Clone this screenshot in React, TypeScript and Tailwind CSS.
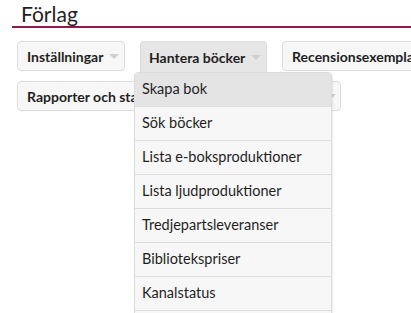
import React from "react";

const Caret = () => (
  <span className="ml-[6px] inline-block h-0 w-0 border-x-[5px] border-t-[5px] border-x-transparent border-t-[#cfcfcf]" />
);

const menuItems = [
  "Skapa bok",
  "Sök böcker",
  "Lista e-boksproduktioner",
  "Lista ljudproduktioner",
  "Tredjepartsleveranser",
  "Bibliotekspriser",
  "Kanalstatus",
  "Rapporter",
];

const App = () => {
  return (
    <div className="h-[313px] w-[411px] overflow-hidden bg-white px-3 font-['Lato',sans-serif] text-[#1f1f1f]">
      <h1 className="w-[600px] border-b-2 border-[#8b1a4e] px-[9px] pt-[1px] text-[21px] leading-[25px]">
        Förlag
      </h1>

      <div className="relative mt-[13px] flex w-[620px] flex-wrap gap-x-[15px] gap-y-[9px] pl-[5px]">
        <button className="flex h-[30px] w-[108px] items-center rounded-[4px] border border-[#dcdcdc] bg-[#f7f7f7] pl-[9px] text-[14px] font-bold">
          Inställningar
          <Caret />
        </button>

        <div className="relative">
          <button className="flex h-[31px] w-[127px] items-center rounded-t-[4px] border border-b-0 border-[#dcdcdc] bg-[#e6e6e6] pl-[8px] text-[14px] font-bold">
            Hantera böcker
            <Caret />
          </button>

          <ul className="absolute left-[-6px] top-[31px] z-10 w-[198px] overflow-hidden rounded-t-[4px] border border-[#dcdcdc] bg-[#f7f7f7] text-[14.5px] shadow-[1px_1px_2px_rgba(0,0,0,0.08)]">
            {menuItems.map((item, i) => (
              <li
                key={item}
                className={`flex h-[34px] items-center border-b border-[#dcdcdc] pb-[1px] pl-[7px] ${
                  i === 0 ? "bg-[#e4e4e4]" : ""
                }`}
              >
                {item}
              </li>
            ))}
          </ul>
        </div>

        <button className="flex h-[30px] items-center rounded-[4px] border border-[#dcdcdc] bg-[#f7f7f7] px-[9px] text-[14px] font-bold">
          Recensionsexemplar
          <Caret />
        </button>

        <button className="flex h-[30px] w-[324px] items-center justify-between rounded-[4px] border border-[#dcdcdc] bg-[#f7f7f7] pl-[9px] pr-[4px] text-[14px] font-bold">
          Rapporter och statistik
          <Caret />
        </button>
      </div>
    </div>
  );
};

export default App;
